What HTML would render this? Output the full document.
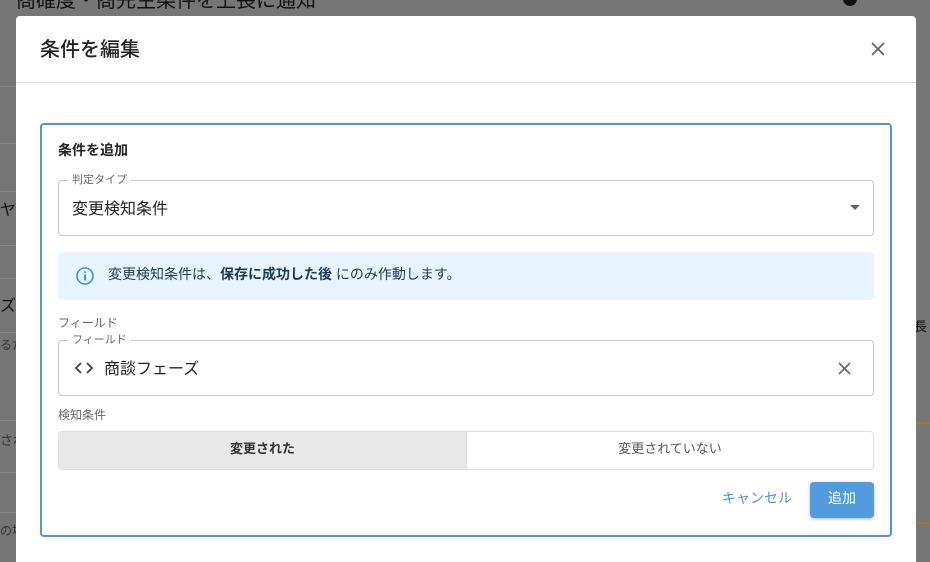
<!DOCTYPE html>
<html><head><meta charset="utf-8"><style>
*{box-sizing:border-box;margin:0;padding:0}
html,body{width:930px;height:562px;overflow:hidden}
body{background:#767676;font-family:"Liberation Sans","Noto Sans CJK JP",sans-serif;position:relative;color:#222}
.bgt{position:absolute;color:#111;font-size:20px;white-space:nowrap}
.line{position:absolute;left:0;width:16px;height:1px;background:#8a8a8a}
.modal{position:absolute;left:16px;top:16px;width:900px;height:546px;background:#fff;border-radius:4px 4px 0 0}
.hdr{height:67px;border-bottom:1px solid #ddd;position:relative}
.hdr h1{position:absolute;left:24px;top:17px;font-size:20px;font-weight:500;color:#222}
.box{position:absolute;left:24px;top:107px;width:852px;height:414px;border:2px solid #4f94dc;border-radius:4px}
.abs{position:absolute}
.fs{position:absolute;left:16px;width:816px;border:1px solid #c4c4c4;border-radius:4px}
.lg{position:absolute;top:-10px;left:9px;background:#fff;padding:0 4px;font-size:11px;color:#666}
</style></head><body>
<div class="bgt" style="left:16px;top:-16px">商確度・商先生条件を上長に通知</div>
<div class="abs" style="left:843px;top:-8px;width:14px;height:14px;border-radius:50%;background:#111"></div>
<div class="bgt" style="left:0;top:196px;font-size:16px">ヤ</div>
<div class="bgt" style="left:0;top:292px;font-size:16px">ズ</div>
<div class="bgt" style="left:0;top:336px;font-size:12px;color:#333">るた</div>
<div class="bgt" style="left:0;top:430px;font-size:13px;color:#333">され</div>
<div class="bgt" style="left:0;top:522px;font-size:12px;color:#333">の場</div>
<div class="bgt" style="left:914px;top:316px;font-size:13px">長</div>
<div class="line" style="top:86px"></div><div class="line" style="top:143px"></div>
<div class="line" style="top:191px"></div><div class="line" style="top:245px"></div>
<div class="line" style="top:278px"></div><div class="line" style="top:332px"></div>
<div class="line" style="top:420px"></div><div class="line" style="top:472px"></div>
<div class="line" style="top:512px"></div>
<div class="abs" style="left:916px;top:422px;width:14px;height:2px;background:#a07a30"></div>
<div class="abs" style="left:916px;top:522px;width:14px;height:2px;background:#a07a30"></div>
<div class="modal">
 <div class="hdr"><h1>条件を編集</h1>
  <svg class="abs" style="left:854px;top:25px" width="16" height="16" viewBox="0 0 16 16"><path d="M2 2L14 14M14 2L2 14" stroke="#666" stroke-width="1.8"/></svg>
 </div>
 <div class="box">
  <div class="abs" style="left:16px;top:15px;font-size:14px;font-weight:bold;color:#222">条件を追加</div>
  <div class="fs" style="top:55px;height:56px">
   <span class="lg">判定タイプ</span>
   <div class="abs" style="left:13px;top:14px;font-size:16px;color:#222">変更検知条件</div>
   <div class="abs" style="right:13px;top:24px;width:0;height:0;border-left:5px solid transparent;border-right:5px solid transparent;border-top:5px solid #666"></div>
  </div>
  <div class="abs" style="left:16px;top:127px;width:816px;height:48px;background:#e8f4fd;border-radius:4px">
   <svg class="abs" style="left:17px;top:14px" width="20" height="20" viewBox="0 0 20 20"><circle cx="10" cy="10" r="8" fill="none" stroke="#3b8fd9" stroke-width="1.6"/><rect x="9.1" y="8.5" width="1.8" height="6" fill="#3b8fd9"/><rect x="9.1" y="5.3" width="1.8" height="1.8" fill="#3b8fd9"/></svg>
   <div class="abs" style="left:50px;top:12px;font-size:14px;color:#1d3a55">変更検知条件は、<b>保存に成功した後</b> にのみ作動します。</div>
  </div>
  <div class="abs" style="left:16px;top:189px;font-size:12px;color:#666">フィールド</div>
  <div class="fs" style="top:215px;height:56px">
   <span class="lg">フィールド</span>
   <svg class="abs" style="left:15px;top:20px" width="20" height="14" viewBox="0 0 20 14"><path d="M7 2L2 7L7 12M13 2L18 7L13 12" fill="none" stroke="#444" stroke-width="1.8"/></svg>
   <div class="abs" style="left:45px;top:14px;font-size:16px;color:#222">商談フェーズ</div>
   <svg class="abs" style="left:779px;top:21px" width="13" height="13" viewBox="0 0 13 13"><path d="M1 1L12 12M12 1L1 12" stroke="#666" stroke-width="1.6"/></svg>
  </div>
  <div class="abs" style="left:16px;top:281px;font-size:12px;color:#666">検知条件</div>
  <div class="abs" style="left:16px;top:306px;width:816px;height:39px;border:1px solid #ddd;border-radius:4px;display:flex;overflow:hidden">
   <div style="width:408px;background:#e8e8e8;border-right:1px solid #ddd;text-align:center;line-height:33px;font-size:13px;font-weight:bold;color:#333">変更された</div>
   <div style="flex:1;text-align:center;line-height:33px;font-size:13px;color:#555">変更されていない</div>
  </div>
  <div class="abs" style="left:680px;top:363px;font-size:14px;color:#4f8fd0">キャンセル</div>
  <div class="abs" style="left:768px;top:357px;width:64px;height:36px;background:#529bdd;border-radius:4px;color:#fff;font-size:14px;text-align:center;line-height:32px;box-shadow:0 1px 3px rgba(0,0,0,.3)">追加</div>
 </div>
</div>
</body></html>
